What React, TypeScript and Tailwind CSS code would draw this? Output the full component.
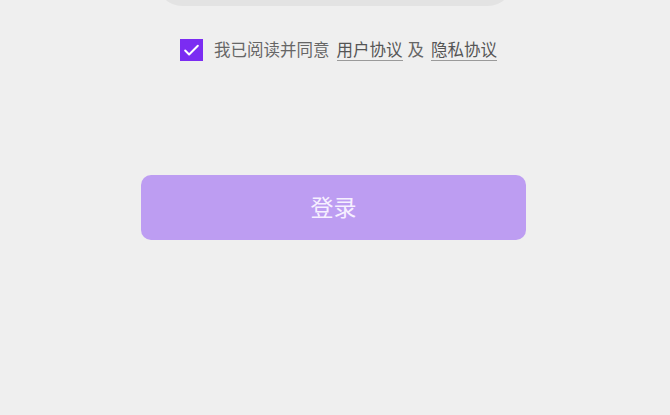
import { Check } from "lucide-react";

export default function App() {
    return (
        <div
            className="flex h-[415px] w-full flex-col items-center overflow-hidden bg-[#efefef]"
            style={{ fontFamily: '"Noto Sans", "Noto Sans CJK SC", sans-serif' }}
        >
            {/* Phone input (cut off at top) */}
            <div className="-mt-[44px] h-[50px] w-[356px] shrink-0 rounded-[25px] bg-[#e3e3e3]" />

            {/* Agreement */}
            <div className="mt-[33px] ml-[7px] flex items-center">
                <div className="flex h-[22px] w-[23px] items-center justify-center bg-[#7b2cf2]">
                    <Check className="h-[19px] w-[19px] text-white" strokeWidth={2.5} />
                </div>
                <span className="ml-[11px] text-[16.5px] leading-[22px] text-[#666666]">我已阅读并同意</span>
                <span className="ml-[7px] border-b border-[#9a9a9a] text-[16.5px] leading-[21px] text-[#555555]">用户协议</span>
                <span className="ml-[5px] text-[16.5px] leading-[22px] text-[#666666]">及</span>
                <span className="ml-[7px] border-b border-[#9a9a9a] text-[16.5px] leading-[21px] text-[#555555]">隐私协议</span>
            </div>

            {/* Login button */}
            <button className="mt-[114px] -ml-[3px] flex h-[65px] w-[385px] shrink-0 items-center justify-center rounded-[10px] bg-[#bd9df2] text-[23px] text-[#f6f0ff]">
                登录
            </button>
        </div>
    );
}
